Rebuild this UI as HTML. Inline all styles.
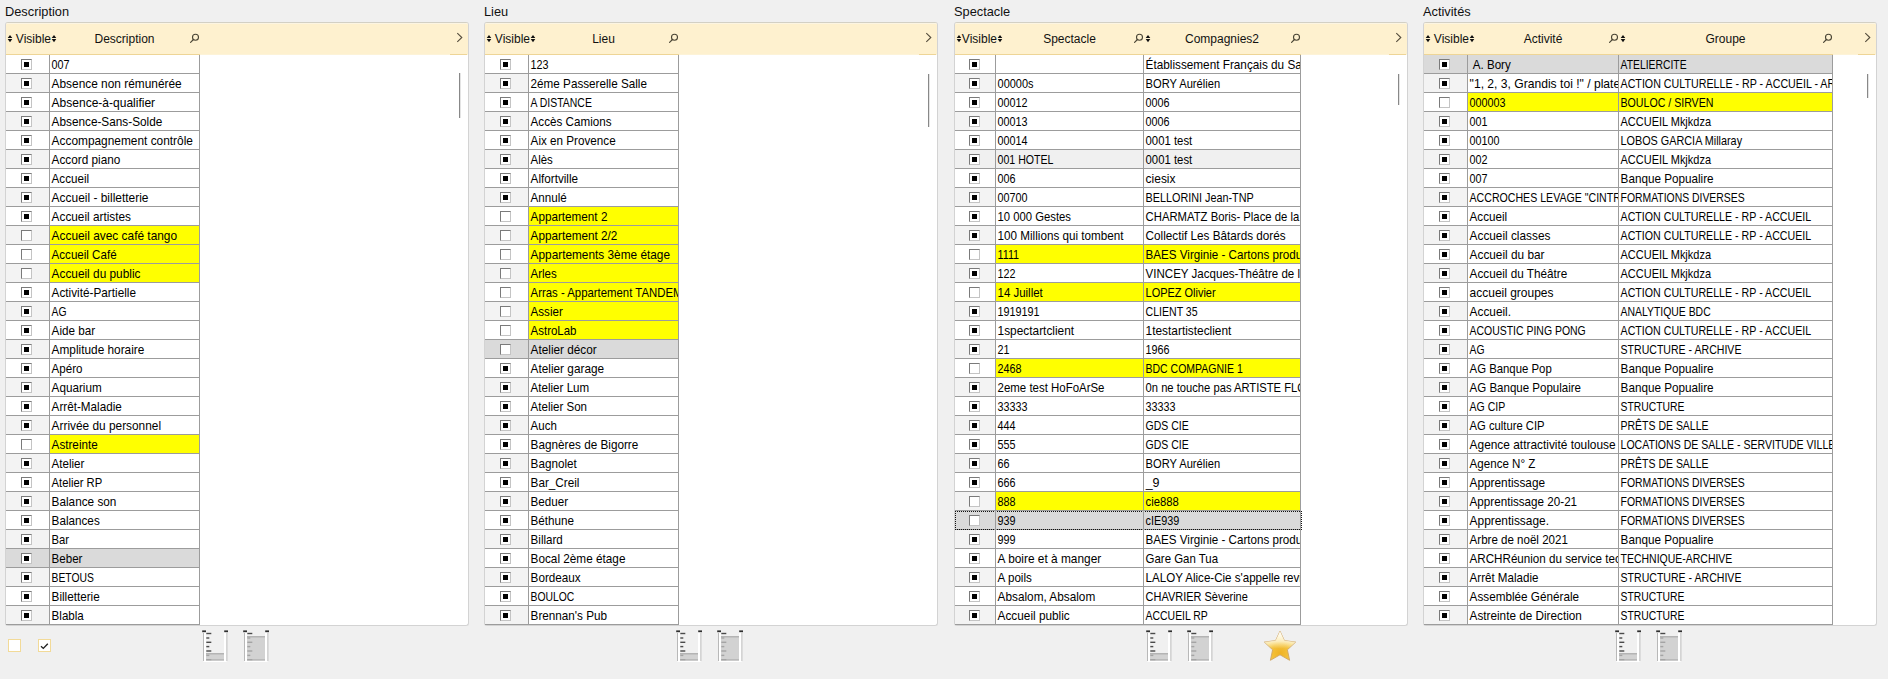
<!DOCTYPE html>
<html><head><meta charset="utf-8">
<style>
html,body{margin:0;padding:0;}
body{width:1888px;height:679px;background:#f0f0f0;position:relative;overflow:hidden;font-family:"Liberation Sans", sans-serif;color:#000;}
.ab{position:absolute;}
.title{position:absolute;top:3px;height:18px;line-height:18px;font-size:12.8px;color:#111;white-space:nowrap;}
.panel{position:absolute;border:1px solid #d3d3d3;border-top-color:#d3d0c4;border-radius:3px;background:#fff;}
.hdr{position:absolute;background:#fef1cf;border-radius:2px 2px 0 0;}
.htxt{position:absolute;height:30px;line-height:30px;font-size:12px;color:#111;white-space:nowrap;}
.htxt.c{text-align:center;}
.cell{position:absolute;height:18px;line-height:20px;font-size:11.85px;white-space:nowrap;overflow:hidden;text-indent:0.6px;color:#000;}
.gl{background:#9c9c9c;}
.cb{position:absolute;width:9px;height:9px;border-top:1px solid #7a7a7a;border-left:1px solid #7a7a7a;border-right:1px solid #c4c4c4;border-bottom:1px solid #c4c4c4;background:#fff;}
.cbi{position:absolute;left:2px;top:2px;width:5px;height:5px;background:#000;}
.ycb{width:11px;height:11px;border:1px solid #f2da98;background:#fff;}
</style></head>
<body>
<div class="title" style="left:5px">Description</div>
<div class="panel" style="left:5px;top:22px;width:462px;height:602px"></div>
<div class="hdr" style="left:6px;top:23px;width:462px;height:31px"></div>
<div class="ab" style="left:7px;top:23px;width:460px;height:1px;background:#fcf5e2"></div>
<div class="ab" style="left:6px;top:54px;width:194px;height:1px;background:#eed596"></div>
<div class="ab" style="left:200px;top:54px;width:268px;height:1px;background:#fdf3d8"></div>
<div class="ab" style="left:450px;top:54px;width:17px;height:1px;background:#eed596"></div>
<svg class="ab" style="left:7px;top:34px" width="6" height="9" viewBox="0 0 6 9"><path d="M0.7 4 L3 0.9 L5.3 4 Z M0.7 5.1 L3 8.2 L5.3 5.1 Z" fill="#111"/></svg>
<div class="htxt" style="left:6px;width:45px;text-align:right;top:24px">Visible</div>
<svg class="ab" style="left:51px;top:34px" width="6" height="9" viewBox="0 0 6 9"><path d="M0.7 4 L3 0.9 L5.3 4 Z M0.7 5.1 L3 8.2 L5.3 5.1 Z" fill="#111"/></svg>
<div class="htxt c" style="left:50px;width:149px;top:24px">Description</div>
<svg class="ab" style="left:189px;top:31px" width="12" height="12" viewBox="0 0 12 12"><circle cx="6.5" cy="6.3" r="3.0" fill="none" stroke="#4a4535" stroke-width="1.1"/><path d="M4.4 8.5 L1.6 11.4" stroke="#4a4535" stroke-width="1.15" stroke-linecap="round"/></svg>
<svg class="ab" style="left:455px;top:31px" width="8" height="12" viewBox="0 0 8 12"><path d="M2.3 2.2 L6.8 6.5 L2.3 10.8" fill="none" stroke="#554d3d" stroke-width="1.1"/></svg>
<div class="ab" style="left:6px;top:55px;width:43px;height:18px;background:#ffffff"></div>
<div class="cb" style="left:21px;top:59px"><div class="cbi"></div></div>
<div class="cell" style="left:50px;top:55px;width:149px;background:#ffffff"><span style="display:inline-block;transform:scaleX(0.9100);transform-origin:0 0">007</span></div>
<div class="ab gl" style="left:6px;top:73px;width:194px;height:1px"></div>
<div class="ab" style="left:6px;top:74px;width:43px;height:18px;background:#f3f3f3"></div>
<div class="cb" style="left:21px;top:78px"><div class="cbi"></div></div>
<div class="cell" style="left:50px;top:74px;width:149px;background:#ffffff"><span style="display:inline-block;transform:scaleX(1.0028);transform-origin:0 0">Absence non rémunérée</span></div>
<div class="ab gl" style="left:6px;top:92px;width:194px;height:1px"></div>
<div class="ab" style="left:6px;top:93px;width:43px;height:18px;background:#ffffff"></div>
<div class="cb" style="left:21px;top:97px"><div class="cbi"></div></div>
<div class="cell" style="left:50px;top:93px;width:149px;background:#ffffff"><span style="display:inline-block;transform:scaleX(1.0142);transform-origin:0 0">Absence-à-qualifier</span></div>
<div class="ab gl" style="left:6px;top:111px;width:194px;height:1px"></div>
<div class="ab" style="left:6px;top:112px;width:43px;height:18px;background:#f3f3f3"></div>
<div class="cb" style="left:21px;top:116px"><div class="cbi"></div></div>
<div class="cell" style="left:50px;top:112px;width:149px;background:#ffffff"><span style="display:inline-block;transform:scaleX(0.9947);transform-origin:0 0">Absence-Sans-Solde</span></div>
<div class="ab gl" style="left:6px;top:130px;width:194px;height:1px"></div>
<div class="ab" style="left:6px;top:131px;width:43px;height:18px;background:#ffffff"></div>
<div class="cb" style="left:21px;top:135px"><div class="cbi"></div></div>
<div class="cell" style="left:50px;top:131px;width:149px;background:#ffffff"><span style="display:inline-block;transform:scaleX(1.0029);transform-origin:0 0">Accompagnement contrôle</span></div>
<div class="ab gl" style="left:6px;top:149px;width:194px;height:1px"></div>
<div class="ab" style="left:6px;top:150px;width:43px;height:18px;background:#f3f3f3"></div>
<div class="cb" style="left:21px;top:154px"><div class="cbi"></div></div>
<div class="cell" style="left:50px;top:150px;width:149px;background:#ffffff"><span style="display:inline-block;transform:scaleX(0.9955);transform-origin:0 0">Accord piano</span></div>
<div class="ab gl" style="left:6px;top:168px;width:194px;height:1px"></div>
<div class="ab" style="left:6px;top:169px;width:43px;height:18px;background:#ffffff"></div>
<div class="cb" style="left:21px;top:173px"><div class="cbi"></div></div>
<div class="cell" style="left:50px;top:169px;width:149px;background:#ffffff"><span style="display:inline-block;transform:scaleX(0.9821);transform-origin:0 0">Accueil</span></div>
<div class="ab gl" style="left:6px;top:187px;width:194px;height:1px"></div>
<div class="ab" style="left:6px;top:188px;width:43px;height:18px;background:#f3f3f3"></div>
<div class="cb" style="left:21px;top:192px"><div class="cbi"></div></div>
<div class="cell" style="left:50px;top:188px;width:149px;background:#ffffff"><span style="display:inline-block;transform:scaleX(1.0081);transform-origin:0 0">Accueil - billetterie</span></div>
<div class="ab gl" style="left:6px;top:206px;width:194px;height:1px"></div>
<div class="ab" style="left:6px;top:207px;width:43px;height:18px;background:#ffffff"></div>
<div class="cb" style="left:21px;top:211px"><div class="cbi"></div></div>
<div class="cell" style="left:50px;top:207px;width:149px;background:#ffffff"><span style="display:inline-block;transform:scaleX(0.9974);transform-origin:0 0">Accueil artistes</span></div>
<div class="ab gl" style="left:6px;top:225px;width:194px;height:1px"></div>
<div class="ab" style="left:6px;top:226px;width:43px;height:18px;background:#f3f3f3"></div>
<div class="cb" style="left:21px;top:230px"></div>
<div class="cell" style="left:50px;top:226px;width:149px;background:#ffff00"><span style="display:inline-block;transform:scaleX(1.0031);transform-origin:0 0">Accueil avec café tango</span></div>
<div class="ab gl" style="left:6px;top:244px;width:194px;height:1px"></div>
<div class="ab" style="left:6px;top:245px;width:43px;height:18px;background:#ffffff"></div>
<div class="cb" style="left:21px;top:249px"></div>
<div class="cell" style="left:50px;top:245px;width:149px;background:#ffff00"><span style="display:inline-block;transform:scaleX(0.9776);transform-origin:0 0">Accueil Café</span></div>
<div class="ab gl" style="left:6px;top:263px;width:194px;height:1px"></div>
<div class="ab" style="left:6px;top:264px;width:43px;height:18px;background:#f3f3f3"></div>
<div class="cb" style="left:21px;top:268px"></div>
<div class="cell" style="left:50px;top:264px;width:149px;background:#ffff00"><span style="display:inline-block;transform:scaleX(0.9995);transform-origin:0 0">Accueil du public</span></div>
<div class="ab gl" style="left:6px;top:282px;width:194px;height:1px"></div>
<div class="ab" style="left:6px;top:283px;width:43px;height:18px;background:#ffffff"></div>
<div class="cb" style="left:21px;top:287px"><div class="cbi"></div></div>
<div class="cell" style="left:50px;top:283px;width:149px;background:#ffffff"><span style="display:inline-block;transform:scaleX(0.9937);transform-origin:0 0">Activité-Partielle</span></div>
<div class="ab gl" style="left:6px;top:301px;width:194px;height:1px"></div>
<div class="ab" style="left:6px;top:302px;width:43px;height:18px;background:#f3f3f3"></div>
<div class="cb" style="left:21px;top:306px"><div class="cbi"></div></div>
<div class="cell" style="left:50px;top:302px;width:149px;background:#ffffff"><span style="display:inline-block;transform:scaleX(0.8750);transform-origin:0 0">AG</span></div>
<div class="ab gl" style="left:6px;top:320px;width:194px;height:1px"></div>
<div class="ab" style="left:6px;top:321px;width:43px;height:18px;background:#ffffff"></div>
<div class="cb" style="left:21px;top:325px"><div class="cbi"></div></div>
<div class="cell" style="left:50px;top:321px;width:149px;background:#ffffff"><span style="display:inline-block;transform:scaleX(0.9873);transform-origin:0 0">Aide bar</span></div>
<div class="ab gl" style="left:6px;top:339px;width:194px;height:1px"></div>
<div class="ab" style="left:6px;top:340px;width:43px;height:18px;background:#f3f3f3"></div>
<div class="cb" style="left:21px;top:344px"><div class="cbi"></div></div>
<div class="cell" style="left:50px;top:340px;width:149px;background:#ffffff"><span style="display:inline-block;transform:scaleX(0.9992);transform-origin:0 0">Amplitude horaire</span></div>
<div class="ab gl" style="left:6px;top:358px;width:194px;height:1px"></div>
<div class="ab" style="left:6px;top:359px;width:43px;height:18px;background:#ffffff"></div>
<div class="cb" style="left:21px;top:363px"><div class="cbi"></div></div>
<div class="cell" style="left:50px;top:359px;width:149px;background:#ffffff"><span style="display:inline-block;transform:scaleX(0.9763);transform-origin:0 0">Apéro</span></div>
<div class="ab gl" style="left:6px;top:377px;width:194px;height:1px"></div>
<div class="ab" style="left:6px;top:378px;width:43px;height:18px;background:#f3f3f3"></div>
<div class="cb" style="left:21px;top:382px"><div class="cbi"></div></div>
<div class="cell" style="left:50px;top:378px;width:149px;background:#ffffff"><span style="display:inline-block;transform:scaleX(0.9890);transform-origin:0 0">Aquarium</span></div>
<div class="ab gl" style="left:6px;top:396px;width:194px;height:1px"></div>
<div class="ab" style="left:6px;top:397px;width:43px;height:18px;background:#ffffff"></div>
<div class="cb" style="left:21px;top:401px"><div class="cbi"></div></div>
<div class="cell" style="left:50px;top:397px;width:149px;background:#ffffff"><span style="display:inline-block;transform:scaleX(0.9868);transform-origin:0 0">Arrêt-Maladie</span></div>
<div class="ab gl" style="left:6px;top:415px;width:194px;height:1px"></div>
<div class="ab" style="left:6px;top:416px;width:43px;height:18px;background:#f3f3f3"></div>
<div class="cb" style="left:21px;top:420px"><div class="cbi"></div></div>
<div class="cell" style="left:50px;top:416px;width:149px;background:#ffffff"><span style="display:inline-block;transform:scaleX(1.0014);transform-origin:0 0">Arrivée du personnel</span></div>
<div class="ab gl" style="left:6px;top:434px;width:194px;height:1px"></div>
<div class="ab" style="left:6px;top:435px;width:43px;height:18px;background:#ffffff"></div>
<div class="cb" style="left:21px;top:439px"></div>
<div class="cell" style="left:50px;top:435px;width:149px;background:#ffff00"><span style="display:inline-block;transform:scaleX(0.9872);transform-origin:0 0">Astreinte</span></div>
<div class="ab gl" style="left:6px;top:453px;width:194px;height:1px"></div>
<div class="ab" style="left:6px;top:454px;width:43px;height:18px;background:#f3f3f3"></div>
<div class="cb" style="left:21px;top:458px"><div class="cbi"></div></div>
<div class="cell" style="left:50px;top:454px;width:149px;background:#ffffff"><span style="display:inline-block;transform:scaleX(0.9782);transform-origin:0 0">Atelier</span></div>
<div class="ab gl" style="left:6px;top:472px;width:194px;height:1px"></div>
<div class="ab" style="left:6px;top:473px;width:43px;height:18px;background:#ffffff"></div>
<div class="cb" style="left:21px;top:477px"><div class="cbi"></div></div>
<div class="cell" style="left:50px;top:473px;width:149px;background:#ffffff"><span style="display:inline-block;transform:scaleX(0.9496);transform-origin:0 0">Atelier RP</span></div>
<div class="ab gl" style="left:6px;top:491px;width:194px;height:1px"></div>
<div class="ab" style="left:6px;top:492px;width:43px;height:18px;background:#f3f3f3"></div>
<div class="cb" style="left:21px;top:496px"><div class="cbi"></div></div>
<div class="cell" style="left:50px;top:492px;width:149px;background:#ffffff"><span style="display:inline-block;transform:scaleX(0.9946);transform-origin:0 0">Balance son</span></div>
<div class="ab gl" style="left:6px;top:510px;width:194px;height:1px"></div>
<div class="ab" style="left:6px;top:511px;width:43px;height:18px;background:#ffffff"></div>
<div class="cb" style="left:21px;top:515px"><div class="cbi"></div></div>
<div class="cell" style="left:50px;top:511px;width:149px;background:#ffffff"><span style="display:inline-block;transform:scaleX(0.9881);transform-origin:0 0">Balances</span></div>
<div class="ab gl" style="left:6px;top:529px;width:194px;height:1px"></div>
<div class="ab" style="left:6px;top:530px;width:43px;height:18px;background:#f3f3f3"></div>
<div class="cb" style="left:21px;top:534px"><div class="cbi"></div></div>
<div class="cell" style="left:50px;top:530px;width:149px;background:#ffffff"><span style="display:inline-block;transform:scaleX(0.9521);transform-origin:0 0">Bar</span></div>
<div class="ab gl" style="left:6px;top:548px;width:194px;height:1px"></div>
<div class="ab" style="left:6px;top:549px;width:43px;height:18px;background:#dadada"></div>
<div class="cb" style="left:21px;top:553px"><div class="cbi"></div></div>
<div class="cell" style="left:50px;top:549px;width:149px;background:#dadada"><span style="display:inline-block;transform:scaleX(0.9763);transform-origin:0 0">Beber</span></div>
<div class="ab gl" style="left:6px;top:567px;width:194px;height:1px"></div>
<div class="ab" style="left:6px;top:568px;width:43px;height:18px;background:#f3f3f3"></div>
<div class="cb" style="left:21px;top:572px"><div class="cbi"></div></div>
<div class="cell" style="left:50px;top:568px;width:149px;background:#ffffff"><span style="display:inline-block;transform:scaleX(0.8750);transform-origin:0 0">BETOUS</span></div>
<div class="ab gl" style="left:6px;top:586px;width:194px;height:1px"></div>
<div class="ab" style="left:6px;top:587px;width:43px;height:18px;background:#ffffff"></div>
<div class="cb" style="left:21px;top:591px"><div class="cbi"></div></div>
<div class="cell" style="left:50px;top:587px;width:149px;background:#ffffff"><span style="display:inline-block;transform:scaleX(0.9881);transform-origin:0 0">Billetterie</span></div>
<div class="ab gl" style="left:6px;top:605px;width:194px;height:1px"></div>
<div class="ab" style="left:6px;top:606px;width:43px;height:18px;background:#f3f3f3"></div>
<div class="cb" style="left:21px;top:610px"><div class="cbi"></div></div>
<div class="cell" style="left:50px;top:606px;width:149px;background:#ffffff"><span style="display:inline-block;transform:scaleX(0.9776);transform-origin:0 0">Blabla</span></div>
<div class="ab gl" style="left:6px;top:624px;width:194px;height:1px"></div>
<div class="ab gl" style="left:49px;top:55px;width:1px;height:570px"></div>
<div class="ab gl" style="left:199px;top:55px;width:1px;height:570px"></div>
<div class="ab" style="left:459px;top:73px;width:1px;height:45px;background:#888"></div>
<div class="ab" style="left:460px;top:73px;width:1px;height:45px;background:#e4e4e4"></div>
<div class="title" style="left:484px">Lieu</div>
<div class="panel" style="left:484px;top:22px;width:452px;height:602px"></div>
<div class="hdr" style="left:485px;top:23px;width:452px;height:31px"></div>
<div class="ab" style="left:486px;top:23px;width:450px;height:1px;background:#fcf5e2"></div>
<div class="ab" style="left:485px;top:54px;width:194px;height:1px;background:#eed596"></div>
<div class="ab" style="left:679px;top:54px;width:258px;height:1px;background:#fdf3d8"></div>
<div class="ab" style="left:919px;top:54px;width:17px;height:1px;background:#eed596"></div>
<svg class="ab" style="left:486px;top:34px" width="6" height="9" viewBox="0 0 6 9"><path d="M0.7 4 L3 0.9 L5.3 4 Z M0.7 5.1 L3 8.2 L5.3 5.1 Z" fill="#111"/></svg>
<div class="htxt" style="left:485px;width:45px;text-align:right;top:24px">Visible</div>
<svg class="ab" style="left:530px;top:34px" width="6" height="9" viewBox="0 0 6 9"><path d="M0.7 4 L3 0.9 L5.3 4 Z M0.7 5.1 L3 8.2 L5.3 5.1 Z" fill="#111"/></svg>
<div class="htxt c" style="left:529px;width:149px;top:24px">Lieu</div>
<svg class="ab" style="left:668px;top:31px" width="12" height="12" viewBox="0 0 12 12"><circle cx="6.5" cy="6.3" r="3.0" fill="none" stroke="#4a4535" stroke-width="1.1"/><path d="M4.4 8.5 L1.6 11.4" stroke="#4a4535" stroke-width="1.15" stroke-linecap="round"/></svg>
<svg class="ab" style="left:924px;top:31px" width="8" height="12" viewBox="0 0 8 12"><path d="M2.3 2.2 L6.8 6.5 L2.3 10.8" fill="none" stroke="#554d3d" stroke-width="1.1"/></svg>
<div class="ab" style="left:485px;top:55px;width:43px;height:18px;background:#ffffff"></div>
<div class="cb" style="left:500px;top:59px"><div class="cbi"></div></div>
<div class="cell" style="left:529px;top:55px;width:149px;background:#ffffff"><span style="display:inline-block;transform:scaleX(0.9100);transform-origin:0 0">123</span></div>
<div class="ab gl" style="left:485px;top:73px;width:194px;height:1px"></div>
<div class="ab" style="left:485px;top:74px;width:43px;height:18px;background:#f3f3f3"></div>
<div class="cb" style="left:500px;top:78px"><div class="cbi"></div></div>
<div class="cell" style="left:529px;top:74px;width:149px;background:#ffffff"><span style="display:inline-block;transform:scaleX(0.9874);transform-origin:0 0">2éme Passerelle Salle</span></div>
<div class="ab gl" style="left:485px;top:92px;width:194px;height:1px"></div>
<div class="ab" style="left:485px;top:93px;width:43px;height:18px;background:#ffffff"></div>
<div class="cb" style="left:500px;top:97px"><div class="cbi"></div></div>
<div class="cell" style="left:529px;top:93px;width:149px;background:#ffffff"><span style="display:inline-block;transform:scaleX(0.8822);transform-origin:0 0">A DISTANCE</span></div>
<div class="ab gl" style="left:485px;top:111px;width:194px;height:1px"></div>
<div class="ab" style="left:485px;top:112px;width:43px;height:18px;background:#f3f3f3"></div>
<div class="cb" style="left:500px;top:116px"><div class="cbi"></div></div>
<div class="cell" style="left:529px;top:112px;width:149px;background:#ffffff"><span style="display:inline-block;transform:scaleX(0.9838);transform-origin:0 0">Accès Camions</span></div>
<div class="ab gl" style="left:485px;top:130px;width:194px;height:1px"></div>
<div class="ab" style="left:485px;top:131px;width:43px;height:18px;background:#ffffff"></div>
<div class="cb" style="left:500px;top:135px"><div class="cbi"></div></div>
<div class="cell" style="left:529px;top:131px;width:149px;background:#ffffff"><span style="display:inline-block;transform:scaleX(0.9868);transform-origin:0 0">Aix en Provence</span></div>
<div class="ab gl" style="left:485px;top:149px;width:194px;height:1px"></div>
<div class="ab" style="left:485px;top:150px;width:43px;height:18px;background:#f3f3f3"></div>
<div class="cb" style="left:500px;top:154px"><div class="cbi"></div></div>
<div class="cell" style="left:529px;top:150px;width:149px;background:#ffffff"><span style="display:inline-block;transform:scaleX(0.9637);transform-origin:0 0">Alès</span></div>
<div class="ab gl" style="left:485px;top:168px;width:194px;height:1px"></div>
<div class="ab" style="left:485px;top:169px;width:43px;height:18px;background:#ffffff"></div>
<div class="cb" style="left:500px;top:173px"><div class="cbi"></div></div>
<div class="cell" style="left:529px;top:169px;width:149px;background:#ffffff"><span style="display:inline-block;transform:scaleX(0.9878);transform-origin:0 0">Alfortville</span></div>
<div class="ab gl" style="left:485px;top:187px;width:194px;height:1px"></div>
<div class="ab" style="left:485px;top:188px;width:43px;height:18px;background:#f3f3f3"></div>
<div class="cb" style="left:500px;top:192px"><div class="cbi"></div></div>
<div class="cell" style="left:529px;top:188px;width:149px;background:#ffffff"><span style="display:inline-block;transform:scaleX(0.9811);transform-origin:0 0">Annulé</span></div>
<div class="ab gl" style="left:485px;top:206px;width:194px;height:1px"></div>
<div class="ab" style="left:485px;top:207px;width:43px;height:18px;background:#ffffff"></div>
<div class="cb" style="left:500px;top:211px"></div>
<div class="cell" style="left:529px;top:207px;width:149px;background:#ffff00"><span style="display:inline-block;transform:scaleX(0.9886);transform-origin:0 0">Appartement 2</span></div>
<div class="ab gl" style="left:485px;top:225px;width:194px;height:1px"></div>
<div class="ab" style="left:485px;top:226px;width:43px;height:18px;background:#f3f3f3"></div>
<div class="cb" style="left:500px;top:230px"></div>
<div class="cell" style="left:529px;top:226px;width:149px;background:#ffff00"><span style="display:inline-block;transform:scaleX(0.9907);transform-origin:0 0">Appartement 2/2</span></div>
<div class="ab gl" style="left:485px;top:244px;width:194px;height:1px"></div>
<div class="ab" style="left:485px;top:245px;width:43px;height:18px;background:#ffffff"></div>
<div class="cb" style="left:500px;top:249px"></div>
<div class="cell" style="left:529px;top:245px;width:149px;background:#ffff00"><span style="display:inline-block;transform:scaleX(0.9986);transform-origin:0 0">Appartements 3ème étage</span></div>
<div class="ab gl" style="left:485px;top:263px;width:194px;height:1px"></div>
<div class="ab" style="left:485px;top:264px;width:43px;height:18px;background:#f3f3f3"></div>
<div class="cb" style="left:500px;top:268px"></div>
<div class="cell" style="left:529px;top:264px;width:149px;background:#ffff00"><span style="display:inline-block;transform:scaleX(0.9705);transform-origin:0 0">Arles</span></div>
<div class="ab gl" style="left:485px;top:282px;width:194px;height:1px"></div>
<div class="ab" style="left:485px;top:283px;width:43px;height:18px;background:#ffffff"></div>
<div class="cb" style="left:500px;top:287px"></div>
<div class="cell" style="left:529px;top:283px;width:149px;background:#ffff00"><span style="display:inline-block;transform:scaleX(0.9604);transform-origin:0 0">Arras - Appartement TANDEM</span></div>
<div class="ab gl" style="left:485px;top:301px;width:194px;height:1px"></div>
<div class="ab" style="left:485px;top:302px;width:43px;height:18px;background:#f3f3f3"></div>
<div class="cb" style="left:500px;top:306px"></div>
<div class="cell" style="left:529px;top:302px;width:149px;background:#ffff00"><span style="display:inline-block;transform:scaleX(0.9776);transform-origin:0 0">Assier</span></div>
<div class="ab gl" style="left:485px;top:320px;width:194px;height:1px"></div>
<div class="ab" style="left:485px;top:321px;width:43px;height:18px;background:#ffffff"></div>
<div class="cb" style="left:500px;top:325px"></div>
<div class="cell" style="left:529px;top:321px;width:149px;background:#ffff00"><span style="display:inline-block;transform:scaleX(0.9687);transform-origin:0 0">AstroLab</span></div>
<div class="ab gl" style="left:485px;top:339px;width:194px;height:1px"></div>
<div class="ab" style="left:485px;top:340px;width:43px;height:18px;background:#dadada"></div>
<div class="cb" style="left:500px;top:344px"></div>
<div class="cell" style="left:529px;top:340px;width:149px;background:#dadada"><span style="display:inline-block;transform:scaleX(0.9949);transform-origin:0 0">Atelier décor</span></div>
<div class="ab gl" style="left:485px;top:358px;width:194px;height:1px"></div>
<div class="ab" style="left:485px;top:359px;width:43px;height:18px;background:#ffffff"></div>
<div class="cb" style="left:500px;top:363px"><div class="cbi"></div></div>
<div class="cell" style="left:529px;top:359px;width:149px;background:#ffffff"><span style="display:inline-block;transform:scaleX(0.9964);transform-origin:0 0">Atelier garage</span></div>
<div class="ab gl" style="left:485px;top:377px;width:194px;height:1px"></div>
<div class="ab" style="left:485px;top:378px;width:43px;height:18px;background:#f3f3f3"></div>
<div class="cb" style="left:500px;top:382px"><div class="cbi"></div></div>
<div class="cell" style="left:529px;top:378px;width:149px;background:#ffffff"><span style="display:inline-block;transform:scaleX(0.9784);transform-origin:0 0">Atelier Lum</span></div>
<div class="ab gl" style="left:485px;top:396px;width:194px;height:1px"></div>
<div class="ab" style="left:485px;top:397px;width:43px;height:18px;background:#ffffff"></div>
<div class="cb" style="left:500px;top:401px"><div class="cbi"></div></div>
<div class="cell" style="left:529px;top:397px;width:149px;background:#ffffff"><span style="display:inline-block;transform:scaleX(0.9743);transform-origin:0 0">Atelier Son</span></div>
<div class="ab gl" style="left:485px;top:415px;width:194px;height:1px"></div>
<div class="ab" style="left:485px;top:416px;width:43px;height:18px;background:#f3f3f3"></div>
<div class="cb" style="left:500px;top:420px"><div class="cbi"></div></div>
<div class="cell" style="left:529px;top:416px;width:149px;background:#ffffff"><span style="display:inline-block;transform:scaleX(0.9705);transform-origin:0 0">Auch</span></div>
<div class="ab gl" style="left:485px;top:434px;width:194px;height:1px"></div>
<div class="ab" style="left:485px;top:435px;width:43px;height:18px;background:#ffffff"></div>
<div class="cb" style="left:500px;top:439px"><div class="cbi"></div></div>
<div class="cell" style="left:529px;top:435px;width:149px;background:#ffffff"><span style="display:inline-block;transform:scaleX(0.9916);transform-origin:0 0">Bagnères de Bigorre</span></div>
<div class="ab gl" style="left:485px;top:453px;width:194px;height:1px"></div>
<div class="ab" style="left:485px;top:454px;width:43px;height:18px;background:#f3f3f3"></div>
<div class="cb" style="left:500px;top:458px"><div class="cbi"></div></div>
<div class="cell" style="left:529px;top:454px;width:149px;background:#ffffff"><span style="display:inline-block;transform:scaleX(0.9872);transform-origin:0 0">Bagnolet</span></div>
<div class="ab gl" style="left:485px;top:472px;width:194px;height:1px"></div>
<div class="ab" style="left:485px;top:473px;width:43px;height:18px;background:#ffffff"></div>
<div class="cb" style="left:500px;top:477px"><div class="cbi"></div></div>
<div class="cell" style="left:529px;top:473px;width:149px;background:#ffffff"><span style="display:inline-block;transform:scaleX(0.9904);transform-origin:0 0">Bar_Creil</span></div>
<div class="ab gl" style="left:485px;top:491px;width:194px;height:1px"></div>
<div class="ab" style="left:485px;top:492px;width:43px;height:18px;background:#f3f3f3"></div>
<div class="cb" style="left:500px;top:496px"><div class="cbi"></div></div>
<div class="cell" style="left:529px;top:492px;width:149px;background:#ffffff"><span style="display:inline-block;transform:scaleX(0.9821);transform-origin:0 0">Beduer</span></div>
<div class="ab gl" style="left:485px;top:510px;width:194px;height:1px"></div>
<div class="ab" style="left:485px;top:511px;width:43px;height:18px;background:#ffffff"></div>
<div class="cb" style="left:500px;top:515px"><div class="cbi"></div></div>
<div class="cell" style="left:529px;top:511px;width:149px;background:#ffffff"><span style="display:inline-block;transform:scaleX(0.9858);transform-origin:0 0">Béthune</span></div>
<div class="ab gl" style="left:485px;top:529px;width:194px;height:1px"></div>
<div class="ab" style="left:485px;top:530px;width:43px;height:18px;background:#f3f3f3"></div>
<div class="cb" style="left:500px;top:534px"><div class="cbi"></div></div>
<div class="cell" style="left:529px;top:530px;width:149px;background:#ffffff"><span style="display:inline-block;transform:scaleX(0.9776);transform-origin:0 0">Billard</span></div>
<div class="ab gl" style="left:485px;top:548px;width:194px;height:1px"></div>
<div class="ab" style="left:485px;top:549px;width:43px;height:18px;background:#ffffff"></div>
<div class="cb" style="left:500px;top:553px"><div class="cbi"></div></div>
<div class="cell" style="left:529px;top:549px;width:149px;background:#ffffff"><span style="display:inline-block;transform:scaleX(0.9933);transform-origin:0 0">Bocal 2ème étage</span></div>
<div class="ab gl" style="left:485px;top:567px;width:194px;height:1px"></div>
<div class="ab" style="left:485px;top:568px;width:43px;height:18px;background:#f3f3f3"></div>
<div class="cb" style="left:500px;top:572px"><div class="cbi"></div></div>
<div class="cell" style="left:529px;top:568px;width:149px;background:#ffffff"><span style="display:inline-block;transform:scaleX(0.9890);transform-origin:0 0">Bordeaux</span></div>
<div class="ab gl" style="left:485px;top:586px;width:194px;height:1px"></div>
<div class="ab" style="left:485px;top:587px;width:43px;height:18px;background:#ffffff"></div>
<div class="cb" style="left:500px;top:591px"><div class="cbi"></div></div>
<div class="cell" style="left:529px;top:587px;width:149px;background:#ffffff"><span style="display:inline-block;transform:scaleX(0.8750);transform-origin:0 0">BOULOC</span></div>
<div class="ab gl" style="left:485px;top:605px;width:194px;height:1px"></div>
<div class="ab" style="left:485px;top:606px;width:43px;height:18px;background:#f3f3f3"></div>
<div class="cb" style="left:500px;top:610px"><div class="cbi"></div></div>
<div class="cell" style="left:529px;top:606px;width:149px;background:#ffffff"><span style="display:inline-block;transform:scaleX(0.9888);transform-origin:0 0">Brennan's Pub</span></div>
<div class="ab gl" style="left:485px;top:624px;width:194px;height:1px"></div>
<div class="ab gl" style="left:528px;top:55px;width:1px;height:570px"></div>
<div class="ab gl" style="left:678px;top:55px;width:1px;height:570px"></div>
<div class="ab" style="left:928px;top:74px;width:1px;height:53px;background:#888"></div>
<div class="ab" style="left:929px;top:74px;width:1px;height:53px;background:#e4e4e4"></div>
<div class="title" style="left:954px">Spectacle</div>
<div class="panel" style="left:954px;top:22px;width:452px;height:602px"></div>
<div class="hdr" style="left:955px;top:23px;width:452px;height:31px"></div>
<div class="ab" style="left:956px;top:23px;width:450px;height:1px;background:#fcf5e2"></div>
<div class="ab" style="left:955px;top:54px;width:346px;height:1px;background:#eed596"></div>
<div class="ab" style="left:1301px;top:54px;width:106px;height:1px;background:#fdf3d8"></div>
<div class="ab" style="left:1389px;top:54px;width:17px;height:1px;background:#eed596"></div>
<svg class="ab" style="left:956px;top:34px" width="6" height="9" viewBox="0 0 6 9"><path d="M0.7 4 L3 0.9 L5.3 4 Z M0.7 5.1 L3 8.2 L5.3 5.1 Z" fill="#111"/></svg>
<div class="htxt" style="left:955px;width:42px;text-align:right;top:24px">Visible</div>
<svg class="ab" style="left:997px;top:34px" width="6" height="9" viewBox="0 0 6 9"><path d="M0.7 4 L3 0.9 L5.3 4 Z M0.7 5.1 L3 8.2 L5.3 5.1 Z" fill="#111"/></svg>
<div class="htxt c" style="left:996px;width:147px;top:24px">Spectacle</div>
<svg class="ab" style="left:1133px;top:31px" width="12" height="12" viewBox="0 0 12 12"><circle cx="6.5" cy="6.3" r="3.0" fill="none" stroke="#4a4535" stroke-width="1.1"/><path d="M4.4 8.5 L1.6 11.4" stroke="#4a4535" stroke-width="1.15" stroke-linecap="round"/></svg>
<svg class="ab" style="left:1145px;top:34px" width="6" height="9" viewBox="0 0 6 9"><path d="M0.7 4 L3 0.9 L5.3 4 Z M0.7 5.1 L3 8.2 L5.3 5.1 Z" fill="#111"/></svg>
<div class="htxt c" style="left:1144px;width:156px;top:24px">Compagnies2</div>
<svg class="ab" style="left:1290px;top:31px" width="12" height="12" viewBox="0 0 12 12"><circle cx="6.5" cy="6.3" r="3.0" fill="none" stroke="#4a4535" stroke-width="1.1"/><path d="M4.4 8.5 L1.6 11.4" stroke="#4a4535" stroke-width="1.15" stroke-linecap="round"/></svg>
<svg class="ab" style="left:1394px;top:31px" width="8" height="12" viewBox="0 0 8 12"><path d="M2.3 2.2 L6.8 6.5 L2.3 10.8" fill="none" stroke="#554d3d" stroke-width="1.1"/></svg>
<div class="ab" style="left:955px;top:55px;width:40px;height:18px;background:#ffffff"></div>
<div class="cb" style="left:969px;top:59px"><div class="cbi"></div></div>
<div class="cell" style="left:996px;top:55px;width:147px;background:#ffffff"><span style="display:inline-block;transform:scaleX(1.0000);transform-origin:0 0"></span></div>
<div class="cell" style="left:1144px;top:55px;width:156px;background:#ffffff"><span style="display:inline-block;transform:scaleX(0.9929);transform-origin:0 0">Établissement Français du Sang</span></div>
<div class="ab gl" style="left:955px;top:73px;width:346px;height:1px"></div>
<div class="ab" style="left:955px;top:74px;width:40px;height:18px;background:#f3f3f3"></div>
<div class="cb" style="left:969px;top:78px"><div class="cbi"></div></div>
<div class="cell" style="left:996px;top:74px;width:147px;background:#ffffff"><span style="display:inline-block;transform:scaleX(0.9252);transform-origin:0 0">00000s</span></div>
<div class="cell" style="left:1144px;top:74px;width:156px;background:#ffffff"><span style="display:inline-block;transform:scaleX(0.9411);transform-origin:0 0">BORY Aurélien</span></div>
<div class="ab gl" style="left:955px;top:92px;width:346px;height:1px"></div>
<div class="ab" style="left:955px;top:93px;width:40px;height:18px;background:#ffffff"></div>
<div class="cb" style="left:969px;top:97px"><div class="cbi"></div></div>
<div class="cell" style="left:996px;top:93px;width:147px;background:#ffffff"><span style="display:inline-block;transform:scaleX(0.9100);transform-origin:0 0">00012</span></div>
<div class="cell" style="left:1144px;top:93px;width:156px;background:#ffffff"><span style="display:inline-block;transform:scaleX(0.9100);transform-origin:0 0">0006</span></div>
<div class="ab gl" style="left:955px;top:111px;width:346px;height:1px"></div>
<div class="ab" style="left:955px;top:112px;width:40px;height:18px;background:#f3f3f3"></div>
<div class="cb" style="left:969px;top:116px"><div class="cbi"></div></div>
<div class="cell" style="left:996px;top:112px;width:147px;background:#ffffff"><span style="display:inline-block;transform:scaleX(0.9100);transform-origin:0 0">00013</span></div>
<div class="cell" style="left:1144px;top:112px;width:156px;background:#ffffff"><span style="display:inline-block;transform:scaleX(0.9100);transform-origin:0 0">0006</span></div>
<div class="ab gl" style="left:955px;top:130px;width:346px;height:1px"></div>
<div class="ab" style="left:955px;top:131px;width:40px;height:18px;background:#ffffff"></div>
<div class="cb" style="left:969px;top:135px"><div class="cbi"></div></div>
<div class="cell" style="left:996px;top:131px;width:147px;background:#ffffff"><span style="display:inline-block;transform:scaleX(0.9100);transform-origin:0 0">00014</span></div>
<div class="cell" style="left:1144px;top:131px;width:156px;background:#ffffff"><span style="display:inline-block;transform:scaleX(0.9573);transform-origin:0 0">0001 test</span></div>
<div class="ab gl" style="left:955px;top:149px;width:346px;height:1px"></div>
<div class="ab" style="left:955px;top:150px;width:40px;height:18px;background:#f0f0f0"></div>
<div class="cb" style="left:969px;top:154px"><div class="cbi"></div></div>
<div class="cell" style="left:996px;top:150px;width:147px;background:#f0f0f0"><span style="display:inline-block;transform:scaleX(0.8942);transform-origin:0 0">001 HOTEL</span></div>
<div class="cell" style="left:1144px;top:150px;width:156px;background:#f0f0f0"><span style="display:inline-block;transform:scaleX(0.9573);transform-origin:0 0">0001 test</span></div>
<div class="ab gl" style="left:955px;top:168px;width:346px;height:1px"></div>
<div class="ab" style="left:955px;top:169px;width:40px;height:18px;background:#ffffff"></div>
<div class="cb" style="left:969px;top:173px"><div class="cbi"></div></div>
<div class="cell" style="left:996px;top:169px;width:147px;background:#ffffff"><span style="display:inline-block;transform:scaleX(0.9100);transform-origin:0 0">006</span></div>
<div class="cell" style="left:1144px;top:169px;width:156px;background:#ffffff"><span style="display:inline-block;transform:scaleX(1.0100);transform-origin:0 0">ciesix</span></div>
<div class="ab gl" style="left:955px;top:187px;width:346px;height:1px"></div>
<div class="ab" style="left:955px;top:188px;width:40px;height:18px;background:#f3f3f3"></div>
<div class="cb" style="left:969px;top:192px"><div class="cbi"></div></div>
<div class="cell" style="left:996px;top:188px;width:147px;background:#ffffff"><span style="display:inline-block;transform:scaleX(0.9100);transform-origin:0 0">00700</span></div>
<div class="cell" style="left:1144px;top:188px;width:156px;background:#ffffff"><span style="display:inline-block;transform:scaleX(0.9126);transform-origin:0 0">BELLORINI Jean-TNP</span></div>
<div class="ab gl" style="left:955px;top:206px;width:346px;height:1px"></div>
<div class="ab" style="left:955px;top:207px;width:40px;height:18px;background:#ffffff"></div>
<div class="cb" style="left:969px;top:211px"><div class="cbi"></div></div>
<div class="cell" style="left:996px;top:207px;width:147px;background:#ffffff"><span style="display:inline-block;transform:scaleX(0.9528);transform-origin:0 0">10 000 Gestes</span></div>
<div class="cell" style="left:1144px;top:207px;width:156px;background:#ffffff"><span style="display:inline-block;transform:scaleX(0.9544);transform-origin:0 0">CHARMATZ Boris- Place de la Danse</span></div>
<div class="ab gl" style="left:955px;top:225px;width:346px;height:1px"></div>
<div class="ab" style="left:955px;top:226px;width:40px;height:18px;background:#f3f3f3"></div>
<div class="cb" style="left:969px;top:230px"><div class="cbi"></div></div>
<div class="cell" style="left:996px;top:226px;width:147px;background:#ffffff"><span style="display:inline-block;transform:scaleX(0.9856);transform-origin:0 0">100 Millions qui tombent</span></div>
<div class="cell" style="left:1144px;top:226px;width:156px;background:#ffffff"><span style="display:inline-block;transform:scaleX(0.9894);transform-origin:0 0">Collectif Les Bâtards dorés</span></div>
<div class="ab gl" style="left:955px;top:244px;width:346px;height:1px"></div>
<div class="ab" style="left:955px;top:245px;width:40px;height:18px;background:#ffffff"></div>
<div class="cb" style="left:969px;top:249px"></div>
<div class="cell" style="left:996px;top:245px;width:147px;background:#ffff00"><span style="display:inline-block;transform:scaleX(0.9100);transform-origin:0 0">1111</span></div>
<div class="cell" style="left:1144px;top:245px;width:156px;background:#ffff00"><span style="display:inline-block;transform:scaleX(0.9804);transform-origin:0 0">BAES Virginie - Cartons production</span></div>
<div class="ab gl" style="left:955px;top:263px;width:346px;height:1px"></div>
<div class="ab" style="left:955px;top:264px;width:40px;height:18px;background:#f3f3f3"></div>
<div class="cb" style="left:969px;top:268px"><div class="cbi"></div></div>
<div class="cell" style="left:996px;top:264px;width:147px;background:#ffffff"><span style="display:inline-block;transform:scaleX(0.9100);transform-origin:0 0">122</span></div>
<div class="cell" style="left:1144px;top:264px;width:156px;background:#ffffff"><span style="display:inline-block;transform:scaleX(0.9749);transform-origin:0 0">VINCEY Jacques-Théâtre de l'Aquarium</span></div>
<div class="ab gl" style="left:955px;top:282px;width:346px;height:1px"></div>
<div class="ab" style="left:955px;top:283px;width:40px;height:18px;background:#ffffff"></div>
<div class="cb" style="left:969px;top:287px"></div>
<div class="cell" style="left:996px;top:283px;width:147px;background:#ffff00"><span style="display:inline-block;transform:scaleX(0.9661);transform-origin:0 0">14 Juillet</span></div>
<div class="cell" style="left:1144px;top:283px;width:156px;background:#ffff00"><span style="display:inline-block;transform:scaleX(0.9252);transform-origin:0 0">LOPEZ Olivier</span></div>
<div class="ab gl" style="left:955px;top:301px;width:346px;height:1px"></div>
<div class="ab" style="left:955px;top:302px;width:40px;height:18px;background:#f3f3f3"></div>
<div class="cb" style="left:969px;top:306px"><div class="cbi"></div></div>
<div class="cell" style="left:996px;top:302px;width:147px;background:#ffffff"><span style="display:inline-block;transform:scaleX(0.9100);transform-origin:0 0">1919191</span></div>
<div class="cell" style="left:1144px;top:302px;width:156px;background:#ffffff"><span style="display:inline-block;transform:scaleX(0.8916);transform-origin:0 0">CLIENT 35</span></div>
<div class="ab gl" style="left:955px;top:320px;width:346px;height:1px"></div>
<div class="ab" style="left:955px;top:321px;width:40px;height:18px;background:#ffffff"></div>
<div class="cb" style="left:969px;top:325px"><div class="cbi"></div></div>
<div class="cell" style="left:996px;top:321px;width:147px;background:#ffffff"><span style="display:inline-block;transform:scaleX(1.0014);transform-origin:0 0">1spectartclient</span></div>
<div class="cell" style="left:1144px;top:321px;width:156px;background:#ffffff"><span style="display:inline-block;transform:scaleX(1.0023);transform-origin:0 0">1testartisteclient</span></div>
<div class="ab gl" style="left:955px;top:339px;width:346px;height:1px"></div>
<div class="ab" style="left:955px;top:340px;width:40px;height:18px;background:#f3f3f3"></div>
<div class="cb" style="left:969px;top:344px"><div class="cbi"></div></div>
<div class="cell" style="left:996px;top:340px;width:147px;background:#ffffff"><span style="display:inline-block;transform:scaleX(0.9100);transform-origin:0 0">21</span></div>
<div class="cell" style="left:1144px;top:340px;width:156px;background:#ffffff"><span style="display:inline-block;transform:scaleX(0.9100);transform-origin:0 0">1966</span></div>
<div class="ab gl" style="left:955px;top:358px;width:346px;height:1px"></div>
<div class="ab" style="left:955px;top:359px;width:40px;height:18px;background:#ffffff"></div>
<div class="cb" style="left:969px;top:363px"></div>
<div class="cell" style="left:996px;top:359px;width:147px;background:#ffff00"><span style="display:inline-block;transform:scaleX(0.9100);transform-origin:0 0">2468</span></div>
<div class="cell" style="left:1144px;top:359px;width:156px;background:#ffff00"><span style="display:inline-block;transform:scaleX(0.8863);transform-origin:0 0">BDC COMPAGNIE 1</span></div>
<div class="ab gl" style="left:955px;top:377px;width:346px;height:1px"></div>
<div class="ab" style="left:955px;top:378px;width:40px;height:18px;background:#f3f3f3"></div>
<div class="cb" style="left:969px;top:382px"><div class="cbi"></div></div>
<div class="cell" style="left:996px;top:378px;width:147px;background:#ffffff"><span style="display:inline-block;transform:scaleX(0.9667);transform-origin:0 0">2eme test HoFoArSe</span></div>
<div class="cell" style="left:1144px;top:378px;width:156px;background:#ffffff"><span style="display:inline-block;transform:scaleX(0.9456);transform-origin:0 0">0n ne touche pas ARTISTE FLOW</span></div>
<div class="ab gl" style="left:955px;top:396px;width:346px;height:1px"></div>
<div class="ab" style="left:955px;top:397px;width:40px;height:18px;background:#ffffff"></div>
<div class="cb" style="left:969px;top:401px"><div class="cbi"></div></div>
<div class="cell" style="left:996px;top:397px;width:147px;background:#ffffff"><span style="display:inline-block;transform:scaleX(0.9100);transform-origin:0 0">33333</span></div>
<div class="cell" style="left:1144px;top:397px;width:156px;background:#ffffff"><span style="display:inline-block;transform:scaleX(0.9100);transform-origin:0 0">33333</span></div>
<div class="ab gl" style="left:955px;top:415px;width:346px;height:1px"></div>
<div class="ab" style="left:955px;top:416px;width:40px;height:18px;background:#f3f3f3"></div>
<div class="cb" style="left:969px;top:420px"><div class="cbi"></div></div>
<div class="cell" style="left:996px;top:416px;width:147px;background:#ffffff"><span style="display:inline-block;transform:scaleX(0.9100);transform-origin:0 0">444</span></div>
<div class="cell" style="left:1144px;top:416px;width:156px;background:#ffffff"><span style="display:inline-block;transform:scaleX(0.8855);transform-origin:0 0">GDS CIE</span></div>
<div class="ab gl" style="left:955px;top:434px;width:346px;height:1px"></div>
<div class="ab" style="left:955px;top:435px;width:40px;height:18px;background:#ffffff"></div>
<div class="cb" style="left:969px;top:439px"><div class="cbi"></div></div>
<div class="cell" style="left:996px;top:435px;width:147px;background:#ffffff"><span style="display:inline-block;transform:scaleX(0.9100);transform-origin:0 0">555</span></div>
<div class="cell" style="left:1144px;top:435px;width:156px;background:#ffffff"><span style="display:inline-block;transform:scaleX(0.8855);transform-origin:0 0">GDS CIE</span></div>
<div class="ab gl" style="left:955px;top:453px;width:346px;height:1px"></div>
<div class="ab" style="left:955px;top:454px;width:40px;height:18px;background:#f3f3f3"></div>
<div class="cb" style="left:969px;top:458px"><div class="cbi"></div></div>
<div class="cell" style="left:996px;top:454px;width:147px;background:#ffffff"><span style="display:inline-block;transform:scaleX(0.9100);transform-origin:0 0">66</span></div>
<div class="cell" style="left:1144px;top:454px;width:156px;background:#ffffff"><span style="display:inline-block;transform:scaleX(0.9411);transform-origin:0 0">BORY Aurélien</span></div>
<div class="ab gl" style="left:955px;top:472px;width:346px;height:1px"></div>
<div class="ab" style="left:955px;top:473px;width:40px;height:18px;background:#ffffff"></div>
<div class="cb" style="left:969px;top:477px"><div class="cbi"></div></div>
<div class="cell" style="left:996px;top:473px;width:147px;background:#ffffff"><span style="display:inline-block;transform:scaleX(0.9100);transform-origin:0 0">666</span></div>
<div class="cell" style="left:1144px;top:473px;width:156px;background:#ffffff"><span style="display:inline-block;transform:scaleX(1.0550);transform-origin:0 0">_9</span></div>
<div class="ab gl" style="left:955px;top:491px;width:346px;height:1px"></div>
<div class="ab" style="left:955px;top:492px;width:40px;height:18px;background:#f3f3f3"></div>
<div class="cb" style="left:969px;top:496px"></div>
<div class="cell" style="left:996px;top:492px;width:147px;background:#ffff00"><span style="display:inline-block;transform:scaleX(0.9100);transform-origin:0 0">888</span></div>
<div class="cell" style="left:1144px;top:492px;width:156px;background:#ffff00"><span style="display:inline-block;transform:scaleX(0.9534);transform-origin:0 0">cie888</span></div>
<div class="ab gl" style="left:955px;top:510px;width:346px;height:1px"></div>
<div class="ab" style="left:955px;top:511px;width:40px;height:18px;background:#dadada"></div>
<div class="cb" style="left:969px;top:515px"></div>
<div class="cell" style="left:996px;top:511px;width:147px;background:#dadada"><span style="display:inline-block;transform:scaleX(0.9100);transform-origin:0 0">939</span></div>
<div class="cell" style="left:1144px;top:511px;width:156px;background:#dadada"><span style="display:inline-block;transform:scaleX(0.9154);transform-origin:0 0">cIE939</span></div>
<div class="ab gl" style="left:955px;top:529px;width:346px;height:1px"></div>
<div class="ab" style="left:955px;top:511px;width:345px;height:17px;border:1px dotted #111"></div>
<div class="ab" style="left:955px;top:530px;width:40px;height:18px;background:#f3f3f3"></div>
<div class="cb" style="left:969px;top:534px"><div class="cbi"></div></div>
<div class="cell" style="left:996px;top:530px;width:147px;background:#ffffff"><span style="display:inline-block;transform:scaleX(0.9100);transform-origin:0 0">999</span></div>
<div class="cell" style="left:1144px;top:530px;width:156px;background:#ffffff"><span style="display:inline-block;transform:scaleX(0.9804);transform-origin:0 0">BAES Virginie - Cartons production</span></div>
<div class="ab gl" style="left:955px;top:548px;width:346px;height:1px"></div>
<div class="ab" style="left:955px;top:549px;width:40px;height:18px;background:#ffffff"></div>
<div class="cb" style="left:969px;top:553px"><div class="cbi"></div></div>
<div class="cell" style="left:996px;top:549px;width:147px;background:#ffffff"><span style="display:inline-block;transform:scaleX(1.0023);transform-origin:0 0">A boire et à manger</span></div>
<div class="cell" style="left:1144px;top:549px;width:156px;background:#ffffff"><span style="display:inline-block;transform:scaleX(0.9660);transform-origin:0 0">Gare Gan Tua</span></div>
<div class="ab gl" style="left:955px;top:567px;width:346px;height:1px"></div>
<div class="ab" style="left:955px;top:568px;width:40px;height:18px;background:#f3f3f3"></div>
<div class="cb" style="left:969px;top:572px"><div class="cbi"></div></div>
<div class="cell" style="left:996px;top:568px;width:147px;background:#ffffff"><span style="display:inline-block;transform:scaleX(0.9819);transform-origin:0 0">A poils</span></div>
<div class="cell" style="left:1144px;top:568px;width:156px;background:#ffffff"><span style="display:inline-block;transform:scaleX(0.9767);transform-origin:0 0">LALOY Alice-Cie s'appelle reviens</span></div>
<div class="ab gl" style="left:955px;top:586px;width:346px;height:1px"></div>
<div class="ab" style="left:955px;top:587px;width:40px;height:18px;background:#ffffff"></div>
<div class="cb" style="left:969px;top:591px"><div class="cbi"></div></div>
<div class="cell" style="left:996px;top:587px;width:147px;background:#ffffff"><span style="display:inline-block;transform:scaleX(0.9954);transform-origin:0 0">Absalom, Absalom</span></div>
<div class="cell" style="left:1144px;top:587px;width:156px;background:#ffffff"><span style="display:inline-block;transform:scaleX(0.9267);transform-origin:0 0">CHAVRIER Sèverine</span></div>
<div class="ab gl" style="left:955px;top:605px;width:346px;height:1px"></div>
<div class="ab" style="left:955px;top:606px;width:40px;height:18px;background:#f3f3f3"></div>
<div class="cb" style="left:969px;top:610px"><div class="cbi"></div></div>
<div class="cell" style="left:996px;top:606px;width:147px;background:#ffffff"><span style="display:inline-block;transform:scaleX(0.9962);transform-origin:0 0">Accueil public</span></div>
<div class="cell" style="left:1144px;top:606px;width:156px;background:#ffffff"><span style="display:inline-block;transform:scaleX(0.8822);transform-origin:0 0">ACCUEIL RP</span></div>
<div class="ab gl" style="left:955px;top:624px;width:346px;height:1px"></div>
<div class="ab gl" style="left:995px;top:55px;width:1px;height:570px"></div>
<div class="ab gl" style="left:1143px;top:55px;width:1px;height:570px"></div>
<div class="ab gl" style="left:1300px;top:55px;width:1px;height:570px"></div>
<div class="ab" style="left:1398px;top:74px;width:1px;height:31px;background:#888"></div>
<div class="ab" style="left:1399px;top:74px;width:1px;height:31px;background:#e4e4e4"></div>
<div class="title" style="left:1423px">Activités</div>
<div class="panel" style="left:1423px;top:22px;width:452px;height:602px"></div>
<div class="hdr" style="left:1424px;top:23px;width:452px;height:31px"></div>
<div class="ab" style="left:1425px;top:23px;width:450px;height:1px;background:#fcf5e2"></div>
<div class="ab" style="left:1424px;top:54px;width:409px;height:1px;background:#eed596"></div>
<div class="ab" style="left:1833px;top:54px;width:43px;height:1px;background:#fdf3d8"></div>
<div class="ab" style="left:1858px;top:54px;width:17px;height:1px;background:#eed596"></div>
<svg class="ab" style="left:1425px;top:34px" width="6" height="9" viewBox="0 0 6 9"><path d="M0.7 4 L3 0.9 L5.3 4 Z M0.7 5.1 L3 8.2 L5.3 5.1 Z" fill="#111"/></svg>
<div class="htxt" style="left:1424px;width:45px;text-align:right;top:24px">Visible</div>
<svg class="ab" style="left:1469px;top:34px" width="6" height="9" viewBox="0 0 6 9"><path d="M0.7 4 L3 0.9 L5.3 4 Z M0.7 5.1 L3 8.2 L5.3 5.1 Z" fill="#111"/></svg>
<div class="htxt c" style="left:1468px;width:150px;top:24px">Activité</div>
<svg class="ab" style="left:1608px;top:31px" width="12" height="12" viewBox="0 0 12 12"><circle cx="6.5" cy="6.3" r="3.0" fill="none" stroke="#4a4535" stroke-width="1.1"/><path d="M4.4 8.5 L1.6 11.4" stroke="#4a4535" stroke-width="1.15" stroke-linecap="round"/></svg>
<svg class="ab" style="left:1620px;top:34px" width="6" height="9" viewBox="0 0 6 9"><path d="M0.7 4 L3 0.9 L5.3 4 Z M0.7 5.1 L3 8.2 L5.3 5.1 Z" fill="#111"/></svg>
<div class="htxt c" style="left:1619px;width:213px;top:24px">Groupe</div>
<svg class="ab" style="left:1822px;top:31px" width="12" height="12" viewBox="0 0 12 12"><circle cx="6.5" cy="6.3" r="3.0" fill="none" stroke="#4a4535" stroke-width="1.1"/><path d="M4.4 8.5 L1.6 11.4" stroke="#4a4535" stroke-width="1.15" stroke-linecap="round"/></svg>
<svg class="ab" style="left:1863px;top:31px" width="8" height="12" viewBox="0 0 8 12"><path d="M2.3 2.2 L6.8 6.5 L2.3 10.8" fill="none" stroke="#554d3d" stroke-width="1.1"/></svg>
<div class="ab" style="left:1424px;top:55px;width:43px;height:18px;background:#dadada"></div>
<div class="cb" style="left:1439px;top:59px"><div class="cbi"></div></div>
<div class="cell" style="left:1468px;top:55px;width:150px;background:#dadada"><span style="display:inline-block;transform:scaleX(0.9773);transform-origin:0 0">&nbsp;A. Bory</span></div>
<div class="cell" style="left:1619px;top:55px;width:213px;background:#dadada"><span style="display:inline-block;transform:scaleX(0.8750);transform-origin:0 0">ATELIERCITE</span></div>
<div class="ab gl" style="left:1424px;top:73px;width:409px;height:1px"></div>
<div class="ab" style="left:1424px;top:74px;width:43px;height:18px;background:#f3f3f3"></div>
<div class="cb" style="left:1439px;top:78px"><div class="cbi"></div></div>
<div class="cell" style="left:1468px;top:74px;width:150px;background:#ffffff"><span style="display:inline-block;transform:scaleX(1.0222);transform-origin:0 0">"1, 2, 3, Grandis toi !" / plateau</span></div>
<div class="cell" style="left:1619px;top:74px;width:213px;background:#ffffff"><span style="display:inline-block;transform:scaleX(0.9018);transform-origin:0 0">ACTION CULTURELLE - RP - ACCUEIL - ARCHIVE</span></div>
<div class="ab gl" style="left:1424px;top:92px;width:409px;height:1px"></div>
<div class="ab" style="left:1424px;top:93px;width:43px;height:18px;background:#ffffff"></div>
<div class="cb" style="left:1439px;top:97px"></div>
<div class="cell" style="left:1468px;top:93px;width:150px;background:#ffff00"><span style="display:inline-block;transform:scaleX(0.9100);transform-origin:0 0">000003</span></div>
<div class="cell" style="left:1619px;top:93px;width:213px;background:#ffff00"><span style="display:inline-block;transform:scaleX(0.8951);transform-origin:0 0">BOULOC / SIRVEN</span></div>
<div class="ab gl" style="left:1424px;top:111px;width:409px;height:1px"></div>
<div class="ab" style="left:1424px;top:112px;width:43px;height:18px;background:#f3f3f3"></div>
<div class="cb" style="left:1439px;top:116px"><div class="cbi"></div></div>
<div class="cell" style="left:1468px;top:112px;width:150px;background:#ffffff"><span style="display:inline-block;transform:scaleX(0.9100);transform-origin:0 0">001</span></div>
<div class="cell" style="left:1619px;top:112px;width:213px;background:#ffffff"><span style="display:inline-block;transform:scaleX(0.9264);transform-origin:0 0">ACCUEIL Mkjkdza</span></div>
<div class="ab gl" style="left:1424px;top:130px;width:409px;height:1px"></div>
<div class="ab" style="left:1424px;top:131px;width:43px;height:18px;background:#ffffff"></div>
<div class="cb" style="left:1439px;top:135px"><div class="cbi"></div></div>
<div class="cell" style="left:1468px;top:131px;width:150px;background:#ffffff"><span style="display:inline-block;transform:scaleX(0.9100);transform-origin:0 0">00100</span></div>
<div class="cell" style="left:1619px;top:131px;width:213px;background:#ffffff"><span style="display:inline-block;transform:scaleX(0.9139);transform-origin:0 0">LOBOS GARCIA Millaray</span></div>
<div class="ab gl" style="left:1424px;top:149px;width:409px;height:1px"></div>
<div class="ab" style="left:1424px;top:150px;width:43px;height:18px;background:#f3f3f3"></div>
<div class="cb" style="left:1439px;top:154px"><div class="cbi"></div></div>
<div class="cell" style="left:1468px;top:150px;width:150px;background:#ffffff"><span style="display:inline-block;transform:scaleX(0.9100);transform-origin:0 0">002</span></div>
<div class="cell" style="left:1619px;top:150px;width:213px;background:#ffffff"><span style="display:inline-block;transform:scaleX(0.9264);transform-origin:0 0">ACCUEIL Mkjkdza</span></div>
<div class="ab gl" style="left:1424px;top:168px;width:409px;height:1px"></div>
<div class="ab" style="left:1424px;top:169px;width:43px;height:18px;background:#ffffff"></div>
<div class="cb" style="left:1439px;top:173px"><div class="cbi"></div></div>
<div class="cell" style="left:1468px;top:169px;width:150px;background:#ffffff"><span style="display:inline-block;transform:scaleX(0.9100);transform-origin:0 0">007</span></div>
<div class="cell" style="left:1619px;top:169px;width:213px;background:#ffffff"><span style="display:inline-block;transform:scaleX(0.9880);transform-origin:0 0">Banque Popualire</span></div>
<div class="ab gl" style="left:1424px;top:187px;width:409px;height:1px"></div>
<div class="ab" style="left:1424px;top:188px;width:43px;height:18px;background:#f3f3f3"></div>
<div class="cb" style="left:1439px;top:192px"><div class="cbi"></div></div>
<div class="cell" style="left:1468px;top:188px;width:150px;background:#ffffff"><span style="display:inline-block;transform:scaleX(0.8947);transform-origin:0 0">ACCROCHES LEVAGE "CINTRES"</span></div>
<div class="cell" style="left:1619px;top:188px;width:213px;background:#ffffff"><span style="display:inline-block;transform:scaleX(0.8786);transform-origin:0 0">FORMATIONS DIVERSES</span></div>
<div class="ab gl" style="left:1424px;top:206px;width:409px;height:1px"></div>
<div class="ab" style="left:1424px;top:207px;width:43px;height:18px;background:#ffffff"></div>
<div class="cb" style="left:1439px;top:211px"><div class="cbi"></div></div>
<div class="cell" style="left:1468px;top:207px;width:150px;background:#ffffff"><span style="display:inline-block;transform:scaleX(0.9821);transform-origin:0 0">Accueil</span></div>
<div class="cell" style="left:1619px;top:207px;width:213px;background:#ffffff"><span style="display:inline-block;transform:scaleX(0.8989);transform-origin:0 0">ACTION CULTURELLE - RP - ACCUEIL</span></div>
<div class="ab gl" style="left:1424px;top:225px;width:409px;height:1px"></div>
<div class="ab" style="left:1424px;top:226px;width:43px;height:18px;background:#f3f3f3"></div>
<div class="cb" style="left:1439px;top:230px"><div class="cbi"></div></div>
<div class="cell" style="left:1468px;top:226px;width:150px;background:#ffffff"><span style="display:inline-block;transform:scaleX(0.9976);transform-origin:0 0">Accueil classes</span></div>
<div class="cell" style="left:1619px;top:226px;width:213px;background:#ffffff"><span style="display:inline-block;transform:scaleX(0.8989);transform-origin:0 0">ACTION CULTURELLE - RP - ACCUEIL</span></div>
<div class="ab gl" style="left:1424px;top:244px;width:409px;height:1px"></div>
<div class="ab" style="left:1424px;top:245px;width:43px;height:18px;background:#ffffff"></div>
<div class="cb" style="left:1439px;top:249px"><div class="cbi"></div></div>
<div class="cell" style="left:1468px;top:245px;width:150px;background:#ffffff"><span style="display:inline-block;transform:scaleX(0.9975);transform-origin:0 0">Accueil du bar</span></div>
<div class="cell" style="left:1619px;top:245px;width:213px;background:#ffffff"><span style="display:inline-block;transform:scaleX(0.9264);transform-origin:0 0">ACCUEIL Mkjkdza</span></div>
<div class="ab gl" style="left:1424px;top:263px;width:409px;height:1px"></div>
<div class="ab" style="left:1424px;top:264px;width:43px;height:18px;background:#f3f3f3"></div>
<div class="cb" style="left:1439px;top:268px"><div class="cbi"></div></div>
<div class="cell" style="left:1468px;top:264px;width:150px;background:#ffffff"><span style="display:inline-block;transform:scaleX(0.9906);transform-origin:0 0">Accueil du Théâtre</span></div>
<div class="cell" style="left:1619px;top:264px;width:213px;background:#ffffff"><span style="display:inline-block;transform:scaleX(0.9264);transform-origin:0 0">ACCUEIL Mkjkdza</span></div>
<div class="ab gl" style="left:1424px;top:282px;width:409px;height:1px"></div>
<div class="ab" style="left:1424px;top:283px;width:43px;height:18px;background:#ffffff"></div>
<div class="cb" style="left:1439px;top:287px"><div class="cbi"></div></div>
<div class="cell" style="left:1468px;top:283px;width:150px;background:#ffffff"><span style="display:inline-block;transform:scaleX(1.0108);transform-origin:0 0">accueil groupes</span></div>
<div class="cell" style="left:1619px;top:283px;width:213px;background:#ffffff"><span style="display:inline-block;transform:scaleX(0.8989);transform-origin:0 0">ACTION CULTURELLE - RP - ACCUEIL</span></div>
<div class="ab gl" style="left:1424px;top:301px;width:409px;height:1px"></div>
<div class="ab" style="left:1424px;top:302px;width:43px;height:18px;background:#f3f3f3"></div>
<div class="cb" style="left:1439px;top:306px"><div class="cbi"></div></div>
<div class="cell" style="left:1468px;top:302px;width:150px;background:#ffffff"><span style="display:inline-block;transform:scaleX(0.9994);transform-origin:0 0">Accueil.</span></div>
<div class="cell" style="left:1619px;top:302px;width:213px;background:#ffffff"><span style="display:inline-block;transform:scaleX(0.8799);transform-origin:0 0">ANALYTIQUE BDC</span></div>
<div class="ab gl" style="left:1424px;top:320px;width:409px;height:1px"></div>
<div class="ab" style="left:1424px;top:321px;width:43px;height:18px;background:#ffffff"></div>
<div class="cb" style="left:1439px;top:325px"><div class="cbi"></div></div>
<div class="cell" style="left:1468px;top:321px;width:150px;background:#ffffff"><span style="display:inline-block;transform:scaleX(0.8828);transform-origin:0 0">ACOUSTIC PING PONG</span></div>
<div class="cell" style="left:1619px;top:321px;width:213px;background:#ffffff"><span style="display:inline-block;transform:scaleX(0.8989);transform-origin:0 0">ACTION CULTURELLE - RP - ACCUEIL</span></div>
<div class="ab gl" style="left:1424px;top:339px;width:409px;height:1px"></div>
<div class="ab" style="left:1424px;top:340px;width:43px;height:18px;background:#f3f3f3"></div>
<div class="cb" style="left:1439px;top:344px"><div class="cbi"></div></div>
<div class="cell" style="left:1468px;top:340px;width:150px;background:#ffffff"><span style="display:inline-block;transform:scaleX(0.8750);transform-origin:0 0">AG</span></div>
<div class="cell" style="left:1619px;top:340px;width:213px;background:#ffffff"><span style="display:inline-block;transform:scaleX(0.8919);transform-origin:0 0">STRUCTURE - ARCHIVE</span></div>
<div class="ab gl" style="left:1424px;top:358px;width:409px;height:1px"></div>
<div class="ab" style="left:1424px;top:359px;width:43px;height:18px;background:#ffffff"></div>
<div class="cb" style="left:1439px;top:363px"><div class="cbi"></div></div>
<div class="cell" style="left:1468px;top:359px;width:150px;background:#ffffff"><span style="display:inline-block;transform:scaleX(0.9596);transform-origin:0 0">AG Banque Pop</span></div>
<div class="cell" style="left:1619px;top:359px;width:213px;background:#ffffff"><span style="display:inline-block;transform:scaleX(0.9880);transform-origin:0 0">Banque Popualire</span></div>
<div class="ab gl" style="left:1424px;top:377px;width:409px;height:1px"></div>
<div class="ab" style="left:1424px;top:378px;width:43px;height:18px;background:#f3f3f3"></div>
<div class="cb" style="left:1439px;top:382px"><div class="cbi"></div></div>
<div class="cell" style="left:1468px;top:378px;width:150px;background:#ffffff"><span style="display:inline-block;transform:scaleX(0.9724);transform-origin:0 0">AG Banque Populaire</span></div>
<div class="cell" style="left:1619px;top:378px;width:213px;background:#ffffff"><span style="display:inline-block;transform:scaleX(0.9880);transform-origin:0 0">Banque Popualire</span></div>
<div class="ab gl" style="left:1424px;top:396px;width:409px;height:1px"></div>
<div class="ab" style="left:1424px;top:397px;width:43px;height:18px;background:#ffffff"></div>
<div class="cb" style="left:1439px;top:401px"><div class="cbi"></div></div>
<div class="cell" style="left:1468px;top:397px;width:150px;background:#ffffff"><span style="display:inline-block;transform:scaleX(0.8877);transform-origin:0 0">AG CIP</span></div>
<div class="cell" style="left:1619px;top:397px;width:213px;background:#ffffff"><span style="display:inline-block;transform:scaleX(0.8750);transform-origin:0 0">STRUCTURE</span></div>
<div class="ab gl" style="left:1424px;top:415px;width:409px;height:1px"></div>
<div class="ab" style="left:1424px;top:416px;width:43px;height:18px;background:#f3f3f3"></div>
<div class="cb" style="left:1439px;top:420px"><div class="cbi"></div></div>
<div class="cell" style="left:1468px;top:416px;width:150px;background:#ffffff"><span style="display:inline-block;transform:scaleX(0.9487);transform-origin:0 0">AG culture CIP</span></div>
<div class="cell" style="left:1619px;top:416px;width:213px;background:#ffffff"><span style="display:inline-block;transform:scaleX(0.8853);transform-origin:0 0">PRÊTS DE SALLE</span></div>
<div class="ab gl" style="left:1424px;top:434px;width:409px;height:1px"></div>
<div class="ab" style="left:1424px;top:435px;width:43px;height:18px;background:#ffffff"></div>
<div class="cb" style="left:1439px;top:439px"><div class="cbi"></div></div>
<div class="cell" style="left:1468px;top:435px;width:150px;background:#ffffff"><span style="display:inline-block;transform:scaleX(1.0036);transform-origin:0 0">Agence attractivité toulouse</span></div>
<div class="cell" style="left:1619px;top:435px;width:213px;background:#ffffff"><span style="display:inline-block;transform:scaleX(0.8908);transform-origin:0 0">LOCATIONS DE SALLE - SERVITUDE VILLE</span></div>
<div class="ab gl" style="left:1424px;top:453px;width:409px;height:1px"></div>
<div class="ab" style="left:1424px;top:454px;width:43px;height:18px;background:#f3f3f3"></div>
<div class="cb" style="left:1439px;top:458px"><div class="cbi"></div></div>
<div class="cell" style="left:1468px;top:454px;width:150px;background:#ffffff"><span style="display:inline-block;transform:scaleX(0.9778);transform-origin:0 0">Agence N° Z</span></div>
<div class="cell" style="left:1619px;top:454px;width:213px;background:#ffffff"><span style="display:inline-block;transform:scaleX(0.8853);transform-origin:0 0">PRÊTS DE SALLE</span></div>
<div class="ab gl" style="left:1424px;top:472px;width:409px;height:1px"></div>
<div class="ab" style="left:1424px;top:473px;width:43px;height:18px;background:#ffffff"></div>
<div class="cb" style="left:1439px;top:477px"><div class="cbi"></div></div>
<div class="cell" style="left:1468px;top:473px;width:150px;background:#ffffff"><span style="display:inline-block;transform:scaleX(0.9959);transform-origin:0 0">Apprentissage</span></div>
<div class="cell" style="left:1619px;top:473px;width:213px;background:#ffffff"><span style="display:inline-block;transform:scaleX(0.8786);transform-origin:0 0">FORMATIONS DIVERSES</span></div>
<div class="ab gl" style="left:1424px;top:491px;width:409px;height:1px"></div>
<div class="ab" style="left:1424px;top:492px;width:43px;height:18px;background:#f3f3f3"></div>
<div class="cb" style="left:1439px;top:496px"><div class="cbi"></div></div>
<div class="cell" style="left:1468px;top:492px;width:150px;background:#ffffff"><span style="display:inline-block;transform:scaleX(0.9836);transform-origin:0 0">Apprentissage 20-21</span></div>
<div class="cell" style="left:1619px;top:492px;width:213px;background:#ffffff"><span style="display:inline-block;transform:scaleX(0.8786);transform-origin:0 0">FORMATIONS DIVERSES</span></div>
<div class="ab gl" style="left:1424px;top:510px;width:409px;height:1px"></div>
<div class="ab" style="left:1424px;top:511px;width:43px;height:18px;background:#ffffff"></div>
<div class="cb" style="left:1439px;top:515px"><div class="cbi"></div></div>
<div class="cell" style="left:1468px;top:511px;width:150px;background:#ffffff"><span style="display:inline-block;transform:scaleX(1.0044);transform-origin:0 0">Apprentissage.</span></div>
<div class="cell" style="left:1619px;top:511px;width:213px;background:#ffffff"><span style="display:inline-block;transform:scaleX(0.8786);transform-origin:0 0">FORMATIONS DIVERSES</span></div>
<div class="ab gl" style="left:1424px;top:529px;width:409px;height:1px"></div>
<div class="ab" style="left:1424px;top:530px;width:43px;height:18px;background:#f3f3f3"></div>
<div class="cb" style="left:1439px;top:534px"><div class="cbi"></div></div>
<div class="cell" style="left:1468px;top:530px;width:150px;background:#ffffff"><span style="display:inline-block;transform:scaleX(0.9752);transform-origin:0 0">Arbre de noël 2021</span></div>
<div class="cell" style="left:1619px;top:530px;width:213px;background:#ffffff"><span style="display:inline-block;transform:scaleX(0.9880);transform-origin:0 0">Banque Popualire</span></div>
<div class="ab gl" style="left:1424px;top:548px;width:409px;height:1px"></div>
<div class="ab" style="left:1424px;top:549px;width:43px;height:18px;background:#ffffff"></div>
<div class="cb" style="left:1439px;top:553px"><div class="cbi"></div></div>
<div class="cell" style="left:1468px;top:549px;width:150px;background:#ffffff"><span style="display:inline-block;transform:scaleX(0.9811);transform-origin:0 0">ARCHRéunion du service technique</span></div>
<div class="cell" style="left:1619px;top:549px;width:213px;background:#ffffff"><span style="display:inline-block;transform:scaleX(0.8851);transform-origin:0 0">TECHNIQUE-ARCHIVE</span></div>
<div class="ab gl" style="left:1424px;top:567px;width:409px;height:1px"></div>
<div class="ab" style="left:1424px;top:568px;width:43px;height:18px;background:#f3f3f3"></div>
<div class="cb" style="left:1439px;top:572px"><div class="cbi"></div></div>
<div class="cell" style="left:1468px;top:568px;width:150px;background:#ffffff"><span style="display:inline-block;transform:scaleX(0.9769);transform-origin:0 0">Arrêt Maladie</span></div>
<div class="cell" style="left:1619px;top:568px;width:213px;background:#ffffff"><span style="display:inline-block;transform:scaleX(0.8919);transform-origin:0 0">STRUCTURE - ARCHIVE</span></div>
<div class="ab gl" style="left:1424px;top:586px;width:409px;height:1px"></div>
<div class="ab" style="left:1424px;top:587px;width:43px;height:18px;background:#ffffff"></div>
<div class="cb" style="left:1439px;top:591px"><div class="cbi"></div></div>
<div class="cell" style="left:1468px;top:587px;width:150px;background:#ffffff"><span style="display:inline-block;transform:scaleX(0.9897);transform-origin:0 0">Assemblée Générale</span></div>
<div class="cell" style="left:1619px;top:587px;width:213px;background:#ffffff"><span style="display:inline-block;transform:scaleX(0.8750);transform-origin:0 0">STRUCTURE</span></div>
<div class="ab gl" style="left:1424px;top:605px;width:409px;height:1px"></div>
<div class="ab" style="left:1424px;top:606px;width:43px;height:18px;background:#f3f3f3"></div>
<div class="cb" style="left:1439px;top:610px"><div class="cbi"></div></div>
<div class="cell" style="left:1468px;top:606px;width:150px;background:#ffffff"><span style="display:inline-block;transform:scaleX(0.9915);transform-origin:0 0">Astreinte de Direction</span></div>
<div class="cell" style="left:1619px;top:606px;width:213px;background:#ffffff"><span style="display:inline-block;transform:scaleX(0.8750);transform-origin:0 0">STRUCTURE</span></div>
<div class="ab gl" style="left:1424px;top:624px;width:409px;height:1px"></div>
<div class="ab gl" style="left:1467px;top:55px;width:1px;height:570px"></div>
<div class="ab gl" style="left:1618px;top:55px;width:1px;height:570px"></div>
<div class="ab gl" style="left:1832px;top:55px;width:1px;height:570px"></div>
<div class="ab" style="left:1867px;top:74px;width:1px;height:24px;background:#888"></div>
<div class="ab" style="left:1868px;top:74px;width:1px;height:24px;background:#e4e4e4"></div>
<div class="ab ycb" style="left:8px;top:639px"></div>
<div class="ab ycb" style="left:38px;top:639px"><svg width="11" height="11" viewBox="0 0 11 11" style="position:absolute;left:0;top:0"><path d="M2.0 6.3 L4.3 8.4 L8.8 3.8" fill="none" stroke="#222" stroke-width="1.4"/></svg></div>
<svg class="ab" style="left:202px;top:630px" width="27" height="33" viewBox="0 0 27 33"><rect x="4" y="23" width="18" height="8" fill="#d2d2d2"/><rect x="4" y="23" width="18" height="1.5" fill="#b4b4b4"/><rect x="4" y="29" width="18" height="1.8" fill="#bababa"/><rect x="4.3" y="2.8" width="5" height="1.4" fill="#4a4a4a"/><rect x="4.3" y="7.3" width="3" height="1.4" fill="#4a4a4a"/><rect x="4.3" y="11.6" width="5" height="1.4" fill="#4a4a4a"/><rect x="4.3" y="15.9" width="3" height="1.4" fill="#4a4a4a"/><rect x="4.3" y="20.3" width="5" height="1.4" fill="#4a4a4a"/><rect x="4.3" y="24.7" width="3" height="1.4" fill="#a4a4a4"/><rect x="4.3" y="29.1" width="5" height="1.4" fill="#a4a4a4"/><rect x="1.5" y="2" width="2.5" height="30" fill="#fff"/><rect x="22" y="2" width="2.5" height="30" fill="#fff"/><rect x="1.2" y="3" width="0.8" height="28" fill="#a8a8a8"/><rect x="24.5" y="3" width="0.8" height="28" fill="#b0b0b0"/><rect x="4" y="30.8" width="18" height="1.2" fill="#fff"/><rect x="0.2" y="0.4" width="3.8" height="1.8" fill="#2e2e2e"/><rect x="22.2" y="0.4" width="3.8" height="1.8" fill="#2e2e2e"/></svg>
<svg class="ab" style="left:243px;top:630px" width="27" height="33" viewBox="0 0 27 33"><rect x="4" y="6" width="18" height="25" fill="#d2d2d2"/><rect x="4" y="6" width="18" height="1.5" fill="#b4b4b4"/><rect x="4" y="29" width="18" height="1.8" fill="#bababa"/><rect x="4.3" y="2.8" width="5" height="1.4" fill="#4a4a4a"/><rect x="4.3" y="7.3" width="3" height="1.4" fill="#a4a4a4"/><rect x="4.3" y="11.6" width="5" height="1.4" fill="#a4a4a4"/><rect x="4.3" y="15.9" width="3" height="1.4" fill="#a4a4a4"/><rect x="4.3" y="20.3" width="5" height="1.4" fill="#a4a4a4"/><rect x="4.3" y="24.7" width="3" height="1.4" fill="#a4a4a4"/><rect x="4.3" y="29.1" width="5" height="1.4" fill="#a4a4a4"/><rect x="1.5" y="2" width="2.5" height="30" fill="#fff"/><rect x="22" y="2" width="2.5" height="30" fill="#fff"/><rect x="1.2" y="3" width="0.8" height="28" fill="#a8a8a8"/><rect x="24.5" y="3" width="0.8" height="28" fill="#b0b0b0"/><rect x="4" y="30.8" width="18" height="1.2" fill="#fff"/><rect x="0.2" y="0.4" width="3.8" height="1.8" fill="#2e2e2e"/><rect x="22.2" y="0.4" width="3.8" height="1.8" fill="#2e2e2e"/></svg>
<svg class="ab" style="left:676px;top:630px" width="27" height="33" viewBox="0 0 27 33"><rect x="4" y="23" width="18" height="8" fill="#d2d2d2"/><rect x="4" y="23" width="18" height="1.5" fill="#b4b4b4"/><rect x="4" y="29" width="18" height="1.8" fill="#bababa"/><rect x="4.3" y="2.8" width="5" height="1.4" fill="#4a4a4a"/><rect x="4.3" y="7.3" width="3" height="1.4" fill="#4a4a4a"/><rect x="4.3" y="11.6" width="5" height="1.4" fill="#4a4a4a"/><rect x="4.3" y="15.9" width="3" height="1.4" fill="#4a4a4a"/><rect x="4.3" y="20.3" width="5" height="1.4" fill="#4a4a4a"/><rect x="4.3" y="24.7" width="3" height="1.4" fill="#a4a4a4"/><rect x="4.3" y="29.1" width="5" height="1.4" fill="#a4a4a4"/><rect x="1.5" y="2" width="2.5" height="30" fill="#fff"/><rect x="22" y="2" width="2.5" height="30" fill="#fff"/><rect x="1.2" y="3" width="0.8" height="28" fill="#a8a8a8"/><rect x="24.5" y="3" width="0.8" height="28" fill="#b0b0b0"/><rect x="4" y="30.8" width="18" height="1.2" fill="#fff"/><rect x="0.2" y="0.4" width="3.8" height="1.8" fill="#2e2e2e"/><rect x="22.2" y="0.4" width="3.8" height="1.8" fill="#2e2e2e"/></svg>
<svg class="ab" style="left:717px;top:630px" width="27" height="33" viewBox="0 0 27 33"><rect x="4" y="6" width="18" height="25" fill="#d2d2d2"/><rect x="4" y="6" width="18" height="1.5" fill="#b4b4b4"/><rect x="4" y="29" width="18" height="1.8" fill="#bababa"/><rect x="4.3" y="2.8" width="5" height="1.4" fill="#4a4a4a"/><rect x="4.3" y="7.3" width="3" height="1.4" fill="#a4a4a4"/><rect x="4.3" y="11.6" width="5" height="1.4" fill="#a4a4a4"/><rect x="4.3" y="15.9" width="3" height="1.4" fill="#a4a4a4"/><rect x="4.3" y="20.3" width="5" height="1.4" fill="#a4a4a4"/><rect x="4.3" y="24.7" width="3" height="1.4" fill="#a4a4a4"/><rect x="4.3" y="29.1" width="5" height="1.4" fill="#a4a4a4"/><rect x="1.5" y="2" width="2.5" height="30" fill="#fff"/><rect x="22" y="2" width="2.5" height="30" fill="#fff"/><rect x="1.2" y="3" width="0.8" height="28" fill="#a8a8a8"/><rect x="24.5" y="3" width="0.8" height="28" fill="#b0b0b0"/><rect x="4" y="30.8" width="18" height="1.2" fill="#fff"/><rect x="0.2" y="0.4" width="3.8" height="1.8" fill="#2e2e2e"/><rect x="22.2" y="0.4" width="3.8" height="1.8" fill="#2e2e2e"/></svg>
<svg class="ab" style="left:1146px;top:630px" width="27" height="33" viewBox="0 0 27 33"><rect x="4" y="23" width="18" height="8" fill="#d2d2d2"/><rect x="4" y="23" width="18" height="1.5" fill="#b4b4b4"/><rect x="4" y="29" width="18" height="1.8" fill="#bababa"/><rect x="4.3" y="2.8" width="5" height="1.4" fill="#4a4a4a"/><rect x="4.3" y="7.3" width="3" height="1.4" fill="#4a4a4a"/><rect x="4.3" y="11.6" width="5" height="1.4" fill="#4a4a4a"/><rect x="4.3" y="15.9" width="3" height="1.4" fill="#4a4a4a"/><rect x="4.3" y="20.3" width="5" height="1.4" fill="#4a4a4a"/><rect x="4.3" y="24.7" width="3" height="1.4" fill="#a4a4a4"/><rect x="4.3" y="29.1" width="5" height="1.4" fill="#a4a4a4"/><rect x="1.5" y="2" width="2.5" height="30" fill="#fff"/><rect x="22" y="2" width="2.5" height="30" fill="#fff"/><rect x="1.2" y="3" width="0.8" height="28" fill="#a8a8a8"/><rect x="24.5" y="3" width="0.8" height="28" fill="#b0b0b0"/><rect x="4" y="30.8" width="18" height="1.2" fill="#fff"/><rect x="0.2" y="0.4" width="3.8" height="1.8" fill="#2e2e2e"/><rect x="22.2" y="0.4" width="3.8" height="1.8" fill="#2e2e2e"/></svg>
<svg class="ab" style="left:1187px;top:630px" width="27" height="33" viewBox="0 0 27 33"><rect x="4" y="6" width="18" height="25" fill="#d2d2d2"/><rect x="4" y="6" width="18" height="1.5" fill="#b4b4b4"/><rect x="4" y="29" width="18" height="1.8" fill="#bababa"/><rect x="4.3" y="2.8" width="5" height="1.4" fill="#4a4a4a"/><rect x="4.3" y="7.3" width="3" height="1.4" fill="#a4a4a4"/><rect x="4.3" y="11.6" width="5" height="1.4" fill="#a4a4a4"/><rect x="4.3" y="15.9" width="3" height="1.4" fill="#a4a4a4"/><rect x="4.3" y="20.3" width="5" height="1.4" fill="#a4a4a4"/><rect x="4.3" y="24.7" width="3" height="1.4" fill="#a4a4a4"/><rect x="4.3" y="29.1" width="5" height="1.4" fill="#a4a4a4"/><rect x="1.5" y="2" width="2.5" height="30" fill="#fff"/><rect x="22" y="2" width="2.5" height="30" fill="#fff"/><rect x="1.2" y="3" width="0.8" height="28" fill="#a8a8a8"/><rect x="24.5" y="3" width="0.8" height="28" fill="#b0b0b0"/><rect x="4" y="30.8" width="18" height="1.2" fill="#fff"/><rect x="0.2" y="0.4" width="3.8" height="1.8" fill="#2e2e2e"/><rect x="22.2" y="0.4" width="3.8" height="1.8" fill="#2e2e2e"/></svg>
<svg class="ab" style="left:1615px;top:630px" width="27" height="33" viewBox="0 0 27 33"><rect x="4" y="23" width="18" height="8" fill="#d2d2d2"/><rect x="4" y="23" width="18" height="1.5" fill="#b4b4b4"/><rect x="4" y="29" width="18" height="1.8" fill="#bababa"/><rect x="4.3" y="2.8" width="5" height="1.4" fill="#4a4a4a"/><rect x="4.3" y="7.3" width="3" height="1.4" fill="#4a4a4a"/><rect x="4.3" y="11.6" width="5" height="1.4" fill="#4a4a4a"/><rect x="4.3" y="15.9" width="3" height="1.4" fill="#4a4a4a"/><rect x="4.3" y="20.3" width="5" height="1.4" fill="#4a4a4a"/><rect x="4.3" y="24.7" width="3" height="1.4" fill="#a4a4a4"/><rect x="4.3" y="29.1" width="5" height="1.4" fill="#a4a4a4"/><rect x="1.5" y="2" width="2.5" height="30" fill="#fff"/><rect x="22" y="2" width="2.5" height="30" fill="#fff"/><rect x="1.2" y="3" width="0.8" height="28" fill="#a8a8a8"/><rect x="24.5" y="3" width="0.8" height="28" fill="#b0b0b0"/><rect x="4" y="30.8" width="18" height="1.2" fill="#fff"/><rect x="0.2" y="0.4" width="3.8" height="1.8" fill="#2e2e2e"/><rect x="22.2" y="0.4" width="3.8" height="1.8" fill="#2e2e2e"/></svg>
<svg class="ab" style="left:1656px;top:630px" width="27" height="33" viewBox="0 0 27 33"><rect x="4" y="6" width="18" height="25" fill="#d2d2d2"/><rect x="4" y="6" width="18" height="1.5" fill="#b4b4b4"/><rect x="4" y="29" width="18" height="1.8" fill="#bababa"/><rect x="4.3" y="2.8" width="5" height="1.4" fill="#4a4a4a"/><rect x="4.3" y="7.3" width="3" height="1.4" fill="#a4a4a4"/><rect x="4.3" y="11.6" width="5" height="1.4" fill="#a4a4a4"/><rect x="4.3" y="15.9" width="3" height="1.4" fill="#a4a4a4"/><rect x="4.3" y="20.3" width="5" height="1.4" fill="#a4a4a4"/><rect x="4.3" y="24.7" width="3" height="1.4" fill="#a4a4a4"/><rect x="4.3" y="29.1" width="5" height="1.4" fill="#a4a4a4"/><rect x="1.5" y="2" width="2.5" height="30" fill="#fff"/><rect x="22" y="2" width="2.5" height="30" fill="#fff"/><rect x="1.2" y="3" width="0.8" height="28" fill="#a8a8a8"/><rect x="24.5" y="3" width="0.8" height="28" fill="#b0b0b0"/><rect x="4" y="30.8" width="18" height="1.2" fill="#fff"/><rect x="0.2" y="0.4" width="3.8" height="1.8" fill="#2e2e2e"/><rect x="22.2" y="0.4" width="3.8" height="1.8" fill="#2e2e2e"/></svg>
<svg class="ab" style="left:1262px;top:629px" width="36" height="34" viewBox="0 0 36 34"><defs><radialGradient id="sr" cx="18" cy="24" r="17" gradientUnits="userSpaceOnUse"><stop offset="0" stop-color="#efb225"/><stop offset="0.55" stop-color="#f4c23c"/><stop offset="1" stop-color="#f9e08c"/></radialGradient><linearGradient id="sg" x1="0" y1="0" x2="0" y2="1"><stop offset="0" stop-color="#ffffff" stop-opacity="0.95"/><stop offset="0.35" stop-color="#fffbe8" stop-opacity="0.7"/><stop offset="0.6" stop-color="#fff6d0" stop-opacity="0"/></linearGradient></defs><path d="M18 2.2 L22.4 11.6 L33.6 13.1 L25.4 20.8 L27.6 31.3 L18 25.8 L8.4 31.3 L10.6 20.8 L2.4 13.1 L13.6 11.6 Z" fill="url(#sr)" stroke="#cfa564" stroke-width="0.9" stroke-linejoin="round"/><path d="M18 2.2 L22.4 11.6 L33.6 13.1 L25.4 20.8 L27.6 31.3 L18 25.8 L8.4 31.3 L10.6 20.8 L2.4 13.1 L13.6 11.6 Z" fill="url(#sg)"/></svg>
</body></html>
